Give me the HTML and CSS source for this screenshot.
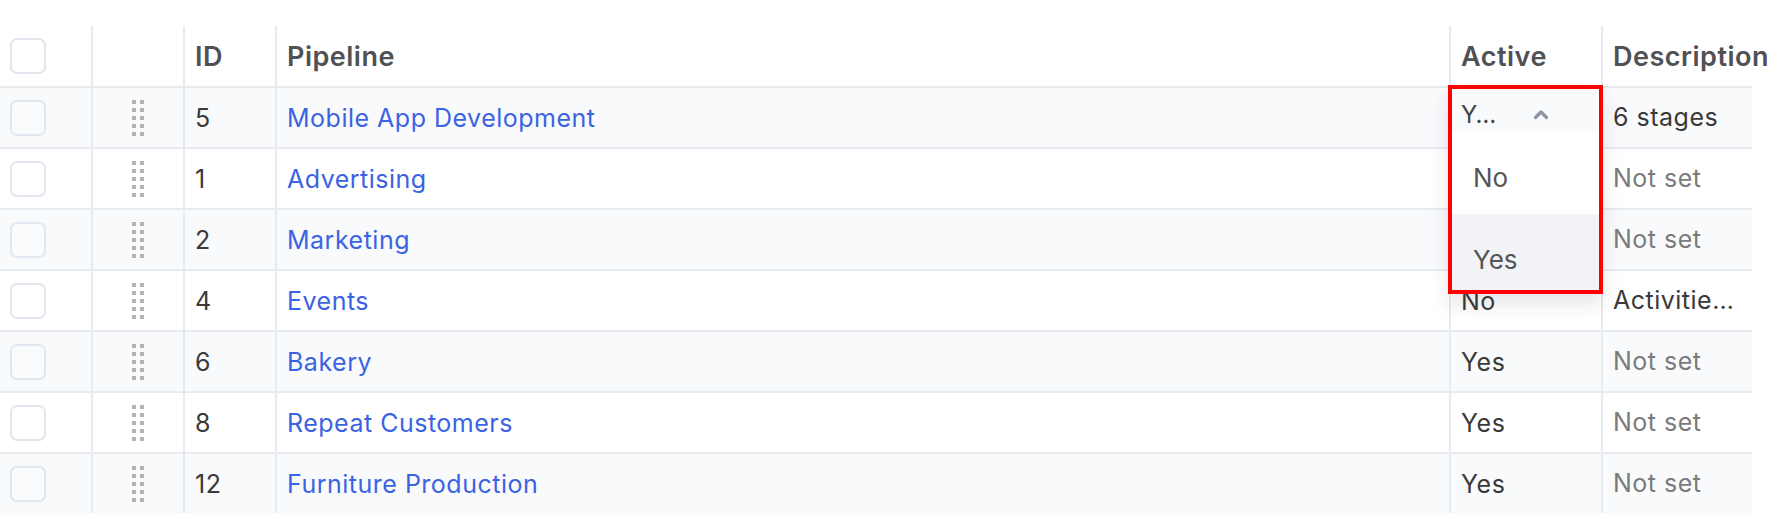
FILE: index.html
```html
<!DOCTYPE html>
<html lang="en">
<head>
  <meta charset="UTF-8" />
  <title>Pipelines</title>
  <link rel="stylesheet" href="styles.css">
</head>
<body>
  <div class="grid">
    <div class="row head">
      <div class="cell check"><span class="box"></span></div>
      <div class="cell"></div>
      <div class="cell">ID</div>
      <div class="cell">Pipeline</div>
      <div class="cell">Active</div>
      <div class="cell over">Description</div>
    </div>

    <div class="row">
      <div class="cell check"><span class="box"></span></div>
      <div class="cell drag"><svg width="12" height="36" viewBox="0 0 12 36"><g fill="#b4b4b4"><rect x="0" y="0" width="4" height="4"/><rect x="8" y="0" width="4" height="4"/><rect x="0" y="8" width="4" height="4"/><rect x="8" y="8" width="4" height="4"/><rect x="0" y="16" width="4" height="4"/><rect x="8" y="16" width="4" height="4"/><rect x="0" y="24" width="4" height="4"/><rect x="8" y="24" width="4" height="4"/><rect x="0" y="32" width="4" height="4"/><rect x="8" y="32" width="4" height="4"/></g></svg></div>
      <div class="cell">5</div>
      <div class="cell"><a href="#">Mobile App Development</a></div>
      <div class="cell open">
        <div class="select">
          <div class="select-head">
            <span class="val">Y…</span>
            <svg width="16" height="11" viewBox="0 0 16 11"><polyline points="2.5,8.5 8,3 13.5,8.5" fill="none" stroke="#8c96a8" stroke-width="3.2" stroke-linecap="round" stroke-linejoin="round"/></svg>
          </div>
          <div class="menu">
            <div class="opt">No</div>
            <div class="opt hover">Yes</div>
          </div>
        </div>
      </div>
      <div class="cell">6 stages</div>
    </div>

    <div class="row">
      <div class="cell check"><span class="box"></span></div>
      <div class="cell drag"><svg width="12" height="36" viewBox="0 0 12 36"><g fill="#b4b4b4"><rect x="0" y="0" width="4" height="4"/><rect x="8" y="0" width="4" height="4"/><rect x="0" y="8" width="4" height="4"/><rect x="8" y="8" width="4" height="4"/><rect x="0" y="16" width="4" height="4"/><rect x="8" y="16" width="4" height="4"/><rect x="0" y="24" width="4" height="4"/><rect x="8" y="24" width="4" height="4"/><rect x="0" y="32" width="4" height="4"/><rect x="8" y="32" width="4" height="4"/></g></svg></div>
      <div class="cell">1</div>
      <div class="cell"><a href="#">Advertising</a></div>
      <div class="cell"></div>
      <div class="cell muted">Not set</div>
    </div>

    <div class="row">
      <div class="cell check"><span class="box"></span></div>
      <div class="cell drag"><svg width="12" height="36" viewBox="0 0 12 36"><g fill="#b4b4b4"><rect x="0" y="0" width="4" height="4"/><rect x="8" y="0" width="4" height="4"/><rect x="0" y="8" width="4" height="4"/><rect x="8" y="8" width="4" height="4"/><rect x="0" y="16" width="4" height="4"/><rect x="8" y="16" width="4" height="4"/><rect x="0" y="24" width="4" height="4"/><rect x="8" y="24" width="4" height="4"/><rect x="0" y="32" width="4" height="4"/><rect x="8" y="32" width="4" height="4"/></g></svg></div>
      <div class="cell">2</div>
      <div class="cell"><a href="#">Marketing</a></div>
      <div class="cell"></div>
      <div class="cell muted">Not set</div>
    </div>

    <div class="row">
      <div class="cell check"><span class="box"></span></div>
      <div class="cell drag"><svg width="12" height="36" viewBox="0 0 12 36"><g fill="#b4b4b4"><rect x="0" y="0" width="4" height="4"/><rect x="8" y="0" width="4" height="4"/><rect x="0" y="8" width="4" height="4"/><rect x="8" y="8" width="4" height="4"/><rect x="0" y="16" width="4" height="4"/><rect x="8" y="16" width="4" height="4"/><rect x="0" y="24" width="4" height="4"/><rect x="8" y="24" width="4" height="4"/><rect x="0" y="32" width="4" height="4"/><rect x="8" y="32" width="4" height="4"/></g></svg></div>
      <div class="cell">4</div>
      <div class="cell"><a href="#">Events</a></div>
      <div class="cell">No</div>
      <div class="cell">Activities and events</div>
    </div>

    <div class="row">
      <div class="cell check"><span class="box"></span></div>
      <div class="cell drag"><svg width="12" height="36" viewBox="0 0 12 36"><g fill="#b4b4b4"><rect x="0" y="0" width="4" height="4"/><rect x="8" y="0" width="4" height="4"/><rect x="0" y="8" width="4" height="4"/><rect x="8" y="8" width="4" height="4"/><rect x="0" y="16" width="4" height="4"/><rect x="8" y="16" width="4" height="4"/><rect x="0" y="24" width="4" height="4"/><rect x="8" y="24" width="4" height="4"/><rect x="0" y="32" width="4" height="4"/><rect x="8" y="32" width="4" height="4"/></g></svg></div>
      <div class="cell">6</div>
      <div class="cell"><a href="#">Bakery</a></div>
      <div class="cell">Yes</div>
      <div class="cell muted">Not set</div>
    </div>

    <div class="row">
      <div class="cell check"><span class="box"></span></div>
      <div class="cell drag"><svg width="12" height="36" viewBox="0 0 12 36"><g fill="#b4b4b4"><rect x="0" y="0" width="4" height="4"/><rect x="8" y="0" width="4" height="4"/><rect x="0" y="8" width="4" height="4"/><rect x="8" y="8" width="4" height="4"/><rect x="0" y="16" width="4" height="4"/><rect x="8" y="16" width="4" height="4"/><rect x="0" y="24" width="4" height="4"/><rect x="8" y="24" width="4" height="4"/><rect x="0" y="32" width="4" height="4"/><rect x="8" y="32" width="4" height="4"/></g></svg></div>
      <div class="cell">8</div>
      <div class="cell"><a href="#">Repeat Customers</a></div>
      <div class="cell">Yes</div>
      <div class="cell muted">Not set</div>
    </div>

    <div class="row last">
      <div class="cell check"><span class="box"></span></div>
      <div class="cell drag"><svg width="12" height="36" viewBox="0 0 12 36"><g fill="#b4b4b4"><rect x="0" y="0" width="4" height="4"/><rect x="8" y="0" width="4" height="4"/><rect x="0" y="8" width="4" height="4"/><rect x="8" y="8" width="4" height="4"/><rect x="0" y="16" width="4" height="4"/><rect x="8" y="16" width="4" height="4"/><rect x="0" y="24" width="4" height="4"/><rect x="8" y="24" width="4" height="4"/><rect x="0" y="32" width="4" height="4"/><rect x="8" y="32" width="4" height="4"/></g></svg></div>
      <div class="cell">12</div>
      <div class="cell"><a href="#">Furniture Production</a></div>
      <div class="cell">Yes</div>
      <div class="cell muted">Not set</div>
    </div>
  </div>
</body>
</html>
```

FILE: styles.css
```css
body {
  margin: 0;
  font-family: Inter, "Noto Sans", sans-serif;
  background: #fff;
  color: #3a3a3a;
}
.grid {
  width: 1752px;
  margin-top: 26px;
}
.row {
  display: grid;
  grid-template-columns: 91px 92px 92px 1174px 152px 151px;
  height: 61px;
  box-sizing: border-box;
  border-bottom: 2px solid #e7eaef;
  font-size: 25px;
  letter-spacing: 0.5px;
}
.row:nth-child(even) {
  background: #f9fafc;
}
.row.last {
  border-bottom: none;
  height: 59px;
}
.row.head {
  height: 62px;
  font-size: 27px;
  font-weight: 600;
  color: #505055;
}
.cell {
  display: flex;
  align-items: center;
  padding: 0 10px;
  border-left: 2px solid #e7eaef;
  white-space: nowrap;
  overflow: hidden;
  text-overflow: ellipsis;
  min-width: 0;
}
.cell.check {
  border-left: none;
  padding-left: 10px;
}
.cell.over {
  overflow: visible;
}
.cell.drag {
  justify-content: center;
  padding: 0;
}
.cell.muted {
  color: #7b7b7b;
}
.row:not(.head) .cell:last-child {
  display: block;
  line-height: 59px;
}
.box {
  width: 32px;
  height: 32px;
  border: 2px solid #e2e6ee;
  border-radius: 7px;
  background: #fff;
  flex: none;
}
.row:nth-child(even) .box {
  background: #fafbfd;
}
a {
  color: #3b63e3;
  text-decoration: none;
}

/* open select in the Active column */
.cell.open {
  position: relative;
  overflow: visible;
}
.select {
  position: absolute;
  left: -3px;
  top: -3px;
  width: 155px;
  height: 209px;
  box-sizing: border-box;
  border: 4px solid #ff0000;
  box-shadow: 0 10px 18px rgba(30, 40, 60, 0.12);
  overflow: hidden;
  z-index: 2;
  letter-spacing: 0;
}
.select-head {
  height: 43px;
  box-sizing: border-box;
  padding: 11px 0 0 9px;
  background: #f9fafc;
  display: flex;
  align-items: flex-start;
  color: #444;
  font-size: 24px;
  letter-spacing: 0.5px;
}
.select-head .val {
  width: 72px;
  line-height: 29px;
}
.select-head svg {
  margin-top: 9px;
}
.menu {
  background: #fff;
  height: 162px;
}
.opt {
  height: 82px;
  box-sizing: border-box;
  padding: 30px 0 0 21px;
  font-size: 26px;
  color: #555;
}
.opt.hover {
  background: #f2f3f7;
  padding-top: 30px;
}
```
